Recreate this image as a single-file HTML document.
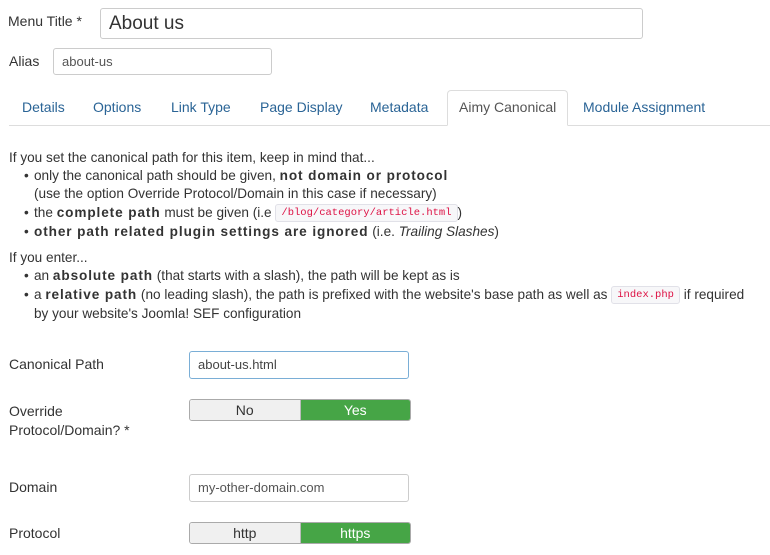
<!DOCTYPE html>
<html><head><style>
body{margin:0;width:770px;height:555px;background:#fff;font-family:"Liberation Sans",sans-serif;color:#333;font-size:13px;position:relative;overflow:hidden}
.a{position:absolute;white-space:nowrap}
.inp{position:absolute;border:1px solid #ccc;border-radius:3px;box-sizing:border-box;background:#fff;color:#555;padding-left:8px}
.tab{position:absolute;top:99px;color:#2a6496;font-size:14px}
code{font-family:"Liberation Mono",monospace;font-size:10.5px;color:#d14;background:#f7f7f9;border:1px solid #e1e1e8;border-radius:3px;padding:1px 5px;line-height:14px;display:inline-block;vertical-align:middle}
.tg{position:absolute;left:189px;width:222px;height:22px;border:1px solid #aaa;border-radius:3px;box-sizing:border-box;display:flex;overflow:hidden;font-size:14px}
.tg div{flex:1;text-align:center;line-height:20px}
.tg .off{background:#f0f0f0;color:#333;border-right:1px solid #bbb}
.tg .on{background:#46a546;color:#fff}
.l{position:absolute;white-space:nowrap;font-size:13.6px;line-height:18px;color:#333;transform:translateY(-9px)}
.l b{letter-spacing:0.9px}
.b{left:24px}
.b::before{content:"•";position:absolute;left:0}
.b span{margin-left:10px}
</style></head><body>
<div class="a" style="left:8px;top:13px;font-size:14px">Menu Title *</div>
<div class="inp" style="left:100px;top:8px;width:543px;height:31px;font-size:19px;line-height:29px;color:#333">About us</div>
<div class="a" style="left:9px;top:53px;font-size:14px">Alias</div>
<div class="inp" style="left:53px;top:48px;width:219px;height:27px;line-height:25px">about-us</div>

<div class="a" style="left:9px;top:125px;width:761px;border-top:1px solid #ddd"></div>
<div class="a" style="left:447px;top:90px;width:121px;height:36px;border:1px solid #ddd;border-bottom:1px solid #fff;border-radius:4px 4px 0 0;box-sizing:border-box;background:#fff"></div>
<div class="tab" style="left:22px">Details</div>
<div class="tab" style="left:93px">Options</div>
<div class="tab" style="left:171px">Link Type</div>
<div class="tab" style="left:260px">Page Display</div>
<div class="tab" style="left:370px">Metadata</div>
<div class="tab" style="left:459px;color:#555">Aimy Canonical</div>
<div class="tab" style="left:583px">Module Assignment</div>

<div class="l" style="left:9px;top:158px">If you set the canonical path for this item, keep in mind that...</div>
<div class="l b" style="top:176px"><span>only the canonical path should be given, <b>not domain or protocol</b></span></div>
<div class="l" style="left:34px;top:194px">(use the option Override Protocol/Domain in this case if necessary)</div>
<div class="l b" style="top:213px"><span>the <b>complete path</b> must be given (i.e <code>/blog/category/article.html</code>)</span></div>
<div class="l b" style="top:232px"><span><b>other path related plugin settings are ignored</b> (i.e. <i>Trailing Slashes</i>)</span></div>
<div class="l" style="left:9px;top:258px">If you enter...</div>
<div class="l b" style="top:276px"><span>an <b>absolute path</b> (that starts with a slash), the path will be kept as is</span></div>
<div class="l b" style="top:295px"><span>a <b>relative path</b> (no leading slash), the path is prefixed with the website's base path as well as <code>index.php</code> if required</span></div>
<div class="l" style="left:34px;top:314px">by your website's Joomla! SEF configuration</div>

<div class="a" style="left:9px;top:356px;font-size:14px">Canonical Path</div>
<div class="inp" style="left:189px;top:351px;width:220px;height:28px;line-height:26px;border-color:#7aaed6;color:#444">about-us.html</div>
<div class="a" style="left:9px;top:402px;font-size:14px;line-height:19px">Override<br>Protocol/Domain? *</div>
<div class="tg" style="top:399px"><div class="off">No</div><div class="on">Yes</div></div>
<div class="a" style="left:9px;top:479px;font-size:14px">Domain</div>
<div class="inp" style="left:189px;top:474px;width:220px;height:28px;line-height:26px">my-other-domain.com</div>
<div class="a" style="left:9px;top:525px;font-size:14px">Protocol</div>
<div class="tg" style="top:522px"><div class="off">http</div><div class="on">https</div></div>
</body></html>
